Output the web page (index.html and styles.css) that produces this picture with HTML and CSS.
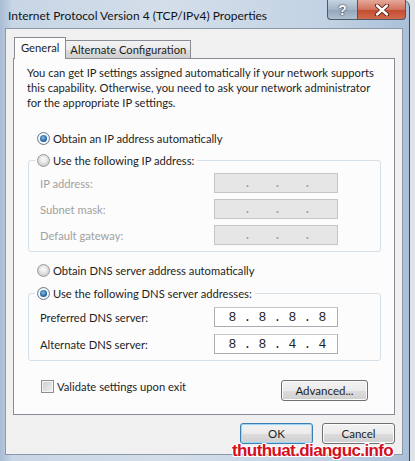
FILE: index.html
```html
<!DOCTYPE html>
<html lang="en">
<head>
    <meta charset="UTF-8">
    <meta name="viewport" content="width=device-width, initial-scale=1.0">
    <title>Internet Protocol Version 4 (TCP/IPv4) Properties</title>
    <link rel="stylesheet" href="styles.css">
</head>
<body>
    <div class="window">
        <div class="titlebar">
            <span class="title">Internet Protocol Version 4 (TCP/IPv4) Properties</span>
            <div class="caption-btns">
                <span class="cap help">?</span>
                <span class="cap close">
                    <svg width="16" height="12" viewBox="0 0 16 12">
                        <path d="M3 1.5 L13 10.5 M13 1.5 L3 10.5" stroke="#5a1a10" stroke-width="4.2" stroke-linecap="round"/>
                        <path d="M3 1.5 L13 10.5 M13 1.5 L3 10.5" stroke="#fff" stroke-width="2.4" stroke-linecap="round"/>
                    </svg>
                </span>
            </div>
        </div>

        <div class="client">
            <div class="tabs">
                <span class="tab active">General</span>
                <span class="tab">Alternate Configuration</span>
            </div>

            <div class="panel">
                <p class="intro">You can get IP settings assigned automatically if your network supports this capability. Otherwise, you need to ask your network administrator for the appropriate IP settings.</p>

                <!-- IP address -->
                <label class="option first"><span class="radio on"></span>Obtain an IP address automatically</label>
                <fieldset class="group">
                    <legend><label class="option"><span class="radio"></span>Use the following IP address:</label></legend>
                    <div class="row disabled">
                        <span class="row-label">IP address:</span>
                        <span class="ipfield off"><i></i><b>.</b><i></i><b>.</b><i></i><b>.</b><i></i></span>
                    </div>
                    <div class="row disabled">
                        <span class="row-label">Subnet mask:</span>
                        <span class="ipfield off"><i></i><b>.</b><i></i><b>.</b><i></i><b>.</b><i></i></span>
                    </div>
                    <div class="row disabled">
                        <span class="row-label">Default gateway:</span>
                        <span class="ipfield off"><i></i><b>.</b><i></i><b>.</b><i></i><b>.</b><i></i></span>
                    </div>
                </fieldset>

                <!-- DNS -->
                <label class="option dns"><span class="radio"></span>Obtain DNS server address automatically</label>
                <fieldset class="group dns-group">
                    <legend><label class="option"><span class="radio on"></span>Use the following DNS server addresses:</label></legend>
                    <div class="row">
                        <span class="row-label">Preferred DNS server:</span>
                        <span class="ipfield"><i>8</i><b>.</b><i>8</i><b>.</b><i>8</i><b>.</b><i>8</i></span>
                    </div>
                    <div class="row">
                        <span class="row-label">Alternate DNS server:</span>
                        <span class="ipfield"><i>8</i><b>.</b><i>8</i><b>.</b><i>4</i><b>.</b><i>4</i></span>
                    </div>
                </fieldset>

                <div class="panel-foot">
                    <label class="check-line"><span class="checkbox"></span>Validate settings upon exit</label>
                    <button class="btn advanced">Advanced...</button>
                </div>
            </div>

            <div class="dialog-btns">
                <button class="btn default">OK</button>
                <button class="btn">Cancel</button>
            </div>
        </div>
    </div>

    <div class="watermark">thuthuat.dianguc.info</div>
</body>
</html>
```

FILE: styles.css
```css
body {
    margin: 0;
    padding: 0;
    background: #dfe3e8;
    font-family: Lato, "Noto Sans", sans-serif;
    font-size: 11.2px;
    color: #1e1e1e;
    position: relative;
    height: 461px;
    overflow: hidden;
}
.window {
    width: 410px;
    height: 461px;
    box-sizing: border-box;
    border-right: 1px solid #3a4450;
    border-radius: 0 7px 0 0;
    background: linear-gradient(90deg, #a9bcd4 0%, #c7d5e5 3%, #d3dee9 40%, #c2d2e4 80%, #aac0d8 100%);
    padding: 0 6px 6px 5px;
    display: flex;
    flex-direction: column;
}
.titlebar {
    height: 28px;
    display: flex;
    justify-content: space-between;
    align-items: flex-start;
    flex-shrink: 0;
}
.title {
    margin: 8px 0 0 3px;
    font-size: 12px;
    color: #101418;
}
.caption-btns {
    display: flex;
    margin-right: -3px;
}
.cap {
    height: 20px;
    display: flex;
    align-items: center;
    justify-content: center;
    border: 1px solid #4a5868;
    border-top: none;
    box-sizing: border-box;
}
.help {
    width: 30px;
    border-right: none;
    border-radius: 0 0 0 4px;
    background: linear-gradient(#c6d3e0, #a4b4c6 50%, #93a5b9 51%, #aebfd0);
    color: #fff;
    font-weight: bold;
    font-size: 14px;
    font-family: "Liberation Sans", sans-serif;
    text-shadow: 0 0 2px #2b3846, 0 0 1px #2b3846;
}
.close {
    width: 49px;
    border-radius: 0 0 4px 0;
    background: linear-gradient(#e6a89a, #d0735e 50%, #c24a30 51%, #d26a4c);
}
.client {
    flex: 1;
    background: #f0f0f0;
    padding: 8px 7px 0 7px;
    display: flex;
    flex-direction: column;
    border: 1px solid #8a98a8;
}
.tabs {
    display: flex;
    align-items: flex-end;
    height: 21px;
    padding-left: 1px;
    position: relative;
    z-index: 1;
}
.tab {
    height: 18px;
    padding: 0 4px;
    line-height: 17px;
    border: 1px solid #898c95;
    border-bottom: none;
    border-left: none;
    background: linear-gradient(#f2f2f2, #ebebeb 50%, #dddddd 51%, #cfcfcf);
    box-sizing: border-box;
}
.tab.active {
    height: 22px;
    margin-bottom: -1px;
    padding: 0 6px;
    line-height: 20px;
    background: #fcfcfc;
    border-left: 1px solid #898c95;
}
.panel {
    height: 357px;
    box-sizing: border-box;
    border: 1px solid #898c95;
    background: #fcfcfc;
    padding: 6px 13px 0 13px;
    display: flex;
    flex-direction: column;
}
.intro {
    margin: 0;
    line-height: 15px;
}
.option {
    display: flex;
    align-items: center;
    height: 15px;
    line-height: 15px;
}
.option.first {
    margin: 21px 0 0 10px;
}
.option.dns {
    margin: 11px 0 0 10px;
}
.radio {
    width: 13px;
    height: 13px;
    box-sizing: border-box;
    border-radius: 50%;
    border: 1px solid #9a9a9a;
    background: radial-gradient(circle at 50% 40%, #f4f4f4 20%, #d0d0d0 70%, #bdbdbd);
    margin-right: 3px;
    display: flex;
    align-items: center;
    justify-content: center;
    flex-shrink: 0;
}
.radio.on {
    border-color: #6b7b8c;
    background: radial-gradient(circle, #fff 40%, #d8dde2);
}
.radio.on::after {
    content: "";
    width: 7px;
    height: 7px;
    border-radius: 50%;
    background: radial-gradient(circle at 45% 40%, #7fc6ef, #2a6ba7 55%, #123e6c);
}
.group {
    margin: 7px 0 0 1px;
    padding: 5px 0 6px 11px;
    border: 1px solid #d5dfe5;
    border-radius: 3px;
    min-width: 0;
}
.group legend {
    padding: 0 3px 0 2px;
    margin-left: -5px;
}
.dns-group {
    margin-top: 8px;
    padding-top: 6px;
}
.row {
    display: flex;
    align-items: center;
    height: 20px;
}
.row + .row {
    margin-top: 6px;
}
.dns-group .row + .row {
    margin-top: 7px;
}
.row-label {
    width: 174px;
}
.disabled .row-label {
    color: #a0a0a0;
}
.ipfield {
    width: 124px;
    height: 20px;
    box-sizing: border-box;
    border: 1px solid #abadb3;
    border-top-color: #c8c8c8;
    background: #fff;
    display: flex;
    align-items: center;
    padding-left: 10px;
    font-family: "Liberation Mono", monospace;
    font-size: 13px;
}
.ipfield.off {
    background: #e6e6e6;
    border-color: #c6c6c6;
    color: #9a9a9a;
}
.ipfield i,
.ipfield b {
    font-style: normal;
    font-weight: normal;
    width: 15px;
    text-align: center;
}
.panel-foot {
    display: flex;
    justify-content: space-between;
    align-items: center;
    margin: 19px 0 0 14px;
    padding-right: 13px;
}
.check-line {
    display: flex;
    align-items: center;
    margin-top: -9px;
}
.checkbox {
    width: 13px;
    height: 13px;
    box-sizing: border-box;
    border: 1px solid #8e8f8f;
    background: linear-gradient(135deg, #cbcbcb, #f2f2f2);
    box-shadow: inset 0 0 0 1px #f4f4f4;
    margin-right: 3px;
}
.btn {
    height: 21px;
    font-family: inherit;
    font-size: 11.5px;
    color: #1e1e1e;
    border: 1px solid #707070;
    border-radius: 3px;
    background: linear-gradient(#f2f2f2, #ebebeb 50%, #dddddd 51%, #cfcfcf);
    box-shadow: inset 0 0 0 1px #fbfbfb;
    padding: 0;
    cursor: pointer;
}
.advanced {
    width: 87px;
}
.dialog-btns {
    display: flex;
    justify-content: flex-end;
    gap: 9px;
    margin-top: 8px;
}
.dialog-btns .btn {
    width: 73px;
}
.btn.default {
    border-color: #3c7fb1;
    box-shadow: inset 0 0 0 1px #9fd6f5, inset 0 0 3px #c6e8fb;
}
.watermark {
    position: absolute;
    left: 232px;
    top: 441px;
    font-family: "Liberation Sans", sans-serif;
    font-weight: bold;
    font-size: 17px;
    letter-spacing: -0.6px;
    color: #d4101c;
    text-shadow: 1px 1px 0 #fff, -1px -1px 0 #fff, 1px -1px 0 #fff, -1px 1px 0 #fff;
}
```
